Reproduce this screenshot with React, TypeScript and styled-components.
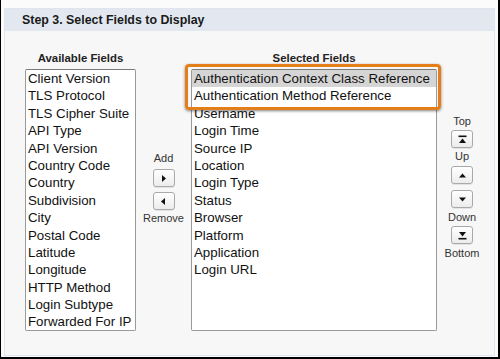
import React from "react";
import styled, { createGlobalStyle } from "styled-components";

const Global = createGlobalStyle`
  html, body { margin: 0; padding: 0; background: #ffffff; }
  * { box-sizing: border-box; }
`;

const Frame = styled.div`
  width: 500px;
  height: 359px;
  background: #fbfbfb;
  border-left: 1px solid #000;
  border-right: 2px solid #000;
  border-bottom: 2px solid #000;
  padding: 8px 3px 1px 3px;
  font-family: "Liberation Sans", Arial, sans-serif;
`;

const Panel = styled.div`
  height: 100%;
  border: 1px solid #dfe5ee;
  background: #f7f7f7;
  display: flex;
  flex-direction: column;
`;

const Header = styled.div`
  height: 22px;
  background: #e3e8f0;
  padding-left: 17px;
  display: flex;
  align-items: center;
  font-weight: bold;
  font-size: 12.4px;
  color: #1a1a1a;
`;

const Body = styled.div`
  display: flex;
  align-items: flex-start;
  padding: 20px 0 0 20px;
`;

const FieldColumn = styled.div<{ $w: number }>`
  width: ${(p) => p.$w}px;
  display: flex;
  flex-direction: column;
  position: relative;
`;

const ColLabel = styled.div`
  height: 14px;
  line-height: 14px;
  text-align: center;
  font-weight: bold;
  font-size: 11.4px;
  color: #222;
  margin-bottom: 4px;
`;

const ListBox = styled.div`
  position: relative;
  height: 262px;
  background: #fff;
  border: 1px solid #9a9a9a;
  border-top-color: #7a7a7a;
  border-radius: 2px;
`;

const Item = styled.div<{ $sel?: boolean }>`
  height: 17.4px;
  line-height: 17.4px;
  padding-left: 2px;
  font-size: 13.3px;
  color: #111;
  white-space: nowrap;
  background: ${(p) => (p.$sel ? "#d5d5d5" : "transparent")};
`;

const Highlight = styled.div`
  position: absolute;
  left: -7px;
  right: -5px;
  top: -6px;
  height: 46px;
  border: 3px solid #e37e1a;
  border-radius: 4px;
  box-shadow: 0 1px 3px rgba(0, 0, 0, 0.5);
  pointer-events: none;
`;

const ButtonColumn = styled.div<{ $w: number; $top: number }>`
  width: ${(p) => p.$w}px;
  padding-top: ${(p) => p.$top}px;
  display: flex;
  flex-direction: column;
  align-items: center;
`;

const SmallLabel = styled.div<{ $mt?: number; $mb?: number }>`
  height: 13px;
  line-height: 13px;
  font-size: 11px;
  color: #333;
  margin-top: ${(p) => p.$mt ?? 0}px;
  margin-bottom: ${(p) => p.$mb ?? 0}px;
`;

const IconButton = styled.div<{ $mt?: number }>`
  width: 22px;
  height: 18px;
  margin-top: ${(p) => p.$mt ?? 0}px;
  border: 1px solid #a9a9a9;
  border-radius: 3px;
  background: linear-gradient(#ffffff, #ececec);
  box-shadow: 0 1px 0 rgba(0, 0, 0, 0.08);
  display: flex;
  align-items: center;
  justify-content: center;
`;

const Glyph = ({ kind }: { kind: "right" | "left" | "up" | "down" | "top" | "bottom" }) => {
  const paths: Record<string, React.ReactNode> = {
    right: <path d="M4 2 L8 5.5 L4 9 Z" />,
    left: <path d="M7 2 L3 5.5 L7 9 Z" />,
    up: <path d="M2 7.5 L5.5 3.5 L9 7.5 Z" />,
    down: <path d="M2 3.5 L5.5 7.5 L9 3.5 Z" />,
    top: (
      <>
        <rect x="1.5" y="1.5" width="8" height="1.6" />
        <path d="M2 9 L5.5 4.5 L9 9 Z" />
      </>
    ),
    bottom: (
      <>
        <path d="M2 2 L5.5 6.5 L9 2 Z" />
        <rect x="1.5" y="7.9" width="8" height="1.6" />
      </>
    ),
  };
  return (
    <svg width="11" height="11" viewBox="0 0 11 11" fill="#111">
      {paths[kind]}
    </svg>
  );
};

const available = [
  "Client Version",
  "TLS Protocol",
  "TLS Cipher Suite",
  "API Type",
  "API Version",
  "Country Code",
  "Country",
  "Subdivision",
  "City",
  "Postal Code",
  "Latitude",
  "Longitude",
  "HTTP Method",
  "Login Subtype",
  "Forwarded For IP",
];

const selected = [
  "Authentication Context Class Reference",
  "Authentication Method Reference",
  "Username",
  "Login Time",
  "Source IP",
  "Location",
  "Login Type",
  "Status",
  "Browser",
  "Platform",
  "Application",
  "Login URL",
];

export default function App() {
  return (
    <>
      <Global />
      <Frame>
        <Panel>
          <Header>Step 3. Select Fields to Display</Header>
          <Body>
            <FieldColumn $w={111}>
              <ColLabel>Available Fields</ColLabel>
              <ListBox>
                {available.map((a) => (
                  <Item key={a}>{a}</Item>
                ))}
              </ListBox>
            </FieldColumn>
            <ButtonColumn $w={55} $top={101}>
              <SmallLabel $mb={4}>Add</SmallLabel>
              <IconButton>
                <Glyph kind="right" />
              </IconButton>
              <IconButton $mt={5}>
                <Glyph kind="left" />
              </IconButton>
              <SmallLabel $mt={2}>Remove</SmallLabel>
            </ButtonColumn>
            <FieldColumn $w={246}>
              <ColLabel>Selected Fields</ColLabel>
              <ListBox>
                {selected.map((s, i) => (
                  <Item key={s} $sel={i === 0}>
                    {s}
                  </Item>
                ))}
                <Highlight />
              </ListBox>
            </FieldColumn>
            <ButtonColumn $w={50} $top={64}>
              <SmallLabel $mb={2}>Top</SmallLabel>
              <IconButton>
                <Glyph kind="top" />
              </IconButton>
              <SmallLabel $mt={2} $mb={3}>Up</SmallLabel>
              <IconButton>
                <Glyph kind="up" />
              </IconButton>
              <IconButton $mt={6}>
                <Glyph kind="down" />
              </IconButton>
              <SmallLabel $mt={3} $mb={2}>Down</SmallLabel>
              <IconButton>
                <Glyph kind="bottom" />
              </IconButton>
              <SmallLabel $mt={3}>Bottom</SmallLabel>
            </ButtonColumn>
          </Body>
        </Panel>
      </Frame>
    </>
  );
}
